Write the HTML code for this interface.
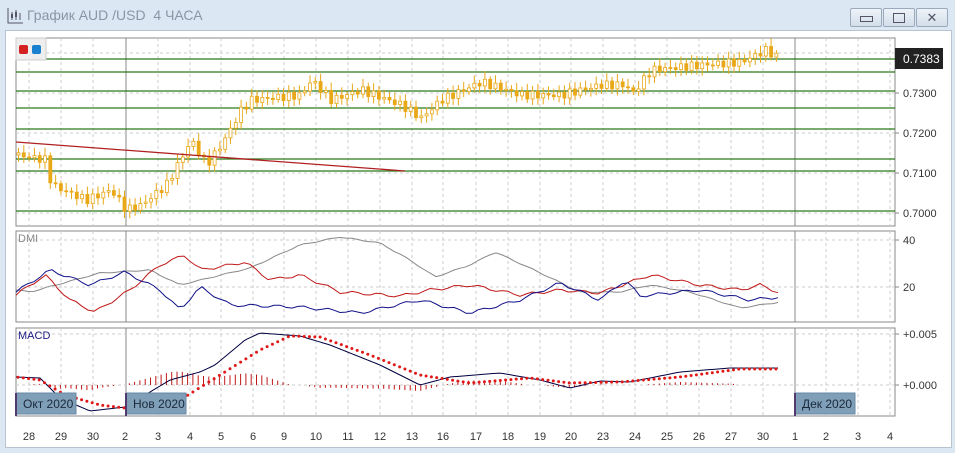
<!DOCTYPE html>
<html><head><meta charset="utf-8"><style>
body{margin:0;width:955px;height:453px;background:#dce7f4;font-family:"Liberation Sans","DejaVu Sans",sans-serif;overflow:hidden;position:relative}
.t{position:absolute;left:27px;top:7px;font-size:14px;color:#8a96a6}
.b{position:absolute;top:8px;width:30px;height:17px;border:1px solid #9aaabb;border-radius:2px;background:linear-gradient(#eef3f9,#d3deea)}
.p{position:absolute;left:5px;top:30px;width:945px;height:416px;background:#fff;border:1px solid #b7c3d0}
svg{position:absolute;left:0;top:0}
</style></head><body>
<svg width="20" height="20" style="left:6px;top:6px"><path d="M2 2v15h15M6 6v8M10 4v10M14 7v7" stroke="#556" fill="none"/><rect x="5" y="8" width="2" height="4" fill="#556"/><rect x="9" y="6" width="2" height="5" fill="#556"/></svg>
<div class="t">График AUD /USD &nbsp;4 ЧАСА</div>
<div class="b" style="left:850px"><div style="position:absolute;left:9px;top:7px;width:11px;height:4px;border:1px solid #556"></div></div>
<div class="b" style="left:883px"><div style="position:absolute;left:9px;top:4px;width:10px;height:8px;border:1px solid #556"></div></div>
<div class="b" style="left:916px;font-size:13px;text-align:center;line-height:17px;color:#556">✕</div>
<div class="p"></div>
<svg id="s" width="955" height="453" font-family="Liberation Sans, sans-serif" font-size="11"></svg>
<script>
const s=document.getElementById('s');let h='';
const L=16,R=895;
const xs=[29,61,93,125,158,190,221,253,284,316,348,380,412,443,476,508,540,571,603,635,667,699,731,763,795,826,858,890];
const lab=['28','29','30','2','3','4','5','6','9','10','11','12','13','16','17','18','19','20','23','24','25','26','27','30','1','2','3','4'];
function panel(t,b){h+=`<rect x="${L}" y="${t}" width="${R-L}" height="${b-t}" fill="none" stroke="#888"/>`;
xs.forEach(x=>{if(x!=125&&x!=795)h+=`<line x1="${x}" y1="${t}" x2="${x}" y2="${b}" stroke="#ccc" stroke-dasharray="3,3"/>`});
h+=`<line x1="126" y1="${t}" x2="126" y2="${b}" stroke="#888"/><line x1="795" y1="${t}" x2="795" y2="${b}" stroke="#888"/>`;}
panel(38,226);panel(231,322);panel(328,416);
[53,93,133,173,213,287,240,334,385].forEach(y=>h+=`<line x1="${L}" y1="${y}" x2="${R}" y2="${y}" stroke="#ccc" stroke-dasharray="3,3"/>`);
[59,72,91,108,129,159,171,211].forEach(y=>h+=`<line x1="${L}" y1="${y}" x2="${R}" y2="${y}" stroke="#2a7a1a" stroke-width="1.3"/>`);
function ip(pts,x){for(let i=1;i<pts.length;i++){if(x<=pts[i][0]){const a=pts[i-1],b=pts[i];return a[1]+(b[1]-a[1])*(x-a[0])/(b[0]-a[0]);}}return pts[pts.length-1][1];}
const P=[[16,155],[45,160],[50,185],[85,200],[110,190],[125,210],[140,205],[165,185],[190,140],[205,165],[220,145],[240,110],[250,100],[300,95],[310,80],[330,100],[360,90],[400,105],[420,118],[440,100],[480,82],[520,95],[560,95],[600,85],[625,85],[630,95],[650,70],[700,65],[740,62],[765,50],[780,60]];
let prev=ip(P,16);
for(let x=17;x<=780;x+=5.3){const c=ip(P,x)+Math.sin(x*1.7)*4;const o=prev;prev=c;const t=Math.min(o,c)-3-Math.abs(Math.sin(x*.9))*5,b=Math.max(o,c)+3+Math.abs(Math.cos(x*1.3))*4;
h+=`<line x1="${x+1.5}" y1="${t}" x2="${x+1.5}" y2="${b}" stroke="#e8a818"/><rect x="${x}" y="${Math.min(o,c)}" width="3" height="${Math.max(1,Math.abs(c-o))}" fill="${c<o?'#fff':'#e8a818'}" stroke="#e8a818" stroke-width=".8"/>`;}
h+=`<line x1="16" y1="142" x2="405" y2="171" stroke="#b02020" stroke-width="1.3"/>`;
function line(pts,col,t,b,a){let d='';for(let x=16;x<=780;x+=6){let y=ip(pts,x)+Math.sin(x*.8)*a;y=Math.max(t,Math.min(b,y));d+=(d?'L':'M')+x+' '+y.toFixed(1);}h+=`<path d="${d}" fill="none" stroke="${col}"/>`;}
line([[16,290],[30,292],[100,273],[150,270],[180,285],[250,268],[300,245],[340,237],[380,243],[410,260],[435,277],[470,265],[495,252],[530,268],[580,292],[620,292],[650,285],[690,292],[740,308],[780,302]],'#888',232,321,0.5);
line([[16,295],[45,275],[70,300],[95,312],[130,290],[160,265],[185,255],[200,270],[230,265],[245,262],[270,280],[300,275],[340,292],[400,296],[430,290],[470,285],[520,295],[560,290],[600,293],[650,275],[700,285],[740,290],[760,285],[780,293]],'#c01818',232,321,1.5);
line([[16,292],[50,270],[90,285],[125,272],[160,290],[180,310],[200,287],[230,305],[300,307],[360,313],[420,300],[470,313],[520,300],[560,283],[600,300],[625,280],[640,296],[700,290],[750,300],[780,297]],'#10108a',232,321,1.5);
const B=[[16,377],[40,378],[60,398],[90,411],[125,407],[170,380],[200,372],[215,365],[245,340],[260,333],[300,336],[330,345],[380,365],[420,385],[450,377],[500,373],[540,380],[570,388],[600,381],[630,382],[680,372],[730,368],[780,368]];
const D=[[16,377],[40,380],[65,395],[100,405],[125,408],[180,400],[220,375],[260,350],[290,336],[320,337],[370,355],[420,375],[470,383],[530,378],[570,383],[620,382],[680,377],[740,369],[780,369]];
for(let x=18;x<=780;x+=5.3){const v=(ip(D,x)-ip(B,x))*0.6;if(Math.abs(v)>.8)h+=`<line x1="${x}" y1="385" x2="${x}" y2="${385-v}" stroke="#c01818"/>`;}
{let d='';for(let x=16;x<=780;x+=3)d+=(d?'L':'M')+x+' '+ip(B,x);h+=`<path d="${d}" fill="none" stroke="#000040"/>`;}
for(let x=18;x<=780;x+=5.3)h+=`<circle cx="${x}" cy="${ip(D,x)}" r="1.5" fill="#e01818"/>`;
[['Окт 2020',16],['Нов 2020',126],['Дек 2020',795]].forEach(([t,x])=>h+=`<rect x="${x}" y="393" width="60" height="21" fill="#7f9eb8" stroke="#6a8aa5"/><line x1="${x}" y1="393" x2="${x}" y2="416" stroke="#503a70" stroke-width="2"/><text x="${x+7}" y="408" font-size="12" fill="#1a2a3a">${t}</text>`);
xs.forEach((x,i)=>h+=`<text x="${x}" y="440" text-anchor="middle" fill="#333">${lab[i]}</text>`);
[['0.7300',97],['0.7200',137],['0.7100',177],['0.7000',217],['40',244],['20',291],['+0.005',338],['+0.000',389]].forEach(([t,y])=>h+=`<line x1="${R}" y1="${y-4}" x2="${R+4}" y2="${y-4}" stroke="#888"/><text x="903" y="${y}" fill="#333">${t}</text>`);
h+=`<rect x="895" y="48" width="48" height="21" fill="#222"/><text x="903" y="63" fill="#fff" font-size="12">0.7383</text>`;
h+=`<rect x="16" y="38" width="30" height="22" fill="#eee" stroke="#ccc"/><rect x="19" y="45" width="9" height="9" rx="2" fill="#d42020"/><rect x="32" y="45" width="9" height="9" rx="2" fill="#1a80d0"/>`;
h+=`<text x="18" y="242" fill="#888">DMI</text><text x="18" y="339" fill="#1a1a80">MACD</text>`;
s.innerHTML=h;
</script>
</body></html>
